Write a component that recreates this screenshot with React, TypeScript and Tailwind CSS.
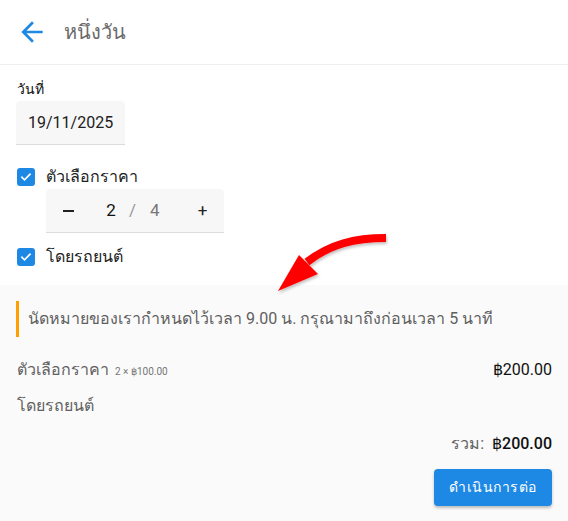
import React from "react";

function Check() {
  return (
    <span className="flex h-[18px] w-[18px] items-center justify-center rounded-[3px] bg-[#1e88e5]">
      <svg width="12" height="12" viewBox="0 0 24 24" fill="none" stroke="white" strokeWidth="3.5" strokeLinecap="square">
        <path d="M4 12.5l5 5L20 6.5" />
      </svg>
    </span>
  );
}

export default function App() {
  return (
    <div className="relative flex h-[521px] w-[568px] flex-col bg-white font-['Roboto','Noto_Sans',sans-serif] text-[16px] text-[#212121]">
      <header className="flex h-[65px] items-center gap-[16px] border-b border-[#eeeeee] pl-[16px]">
        <svg width="32" height="32" viewBox="0 0 24 24" fill="#1e88e5">
          <path d="M20 11H7.83l5.59-5.59L12 4l-8 8 8 8 1.41-1.41L7.83 13H20v-2z" />
        </svg>
        <span className="text-[20px] text-[#6b6b6b]">หนึ่งวัน</span>
      </header>

      <div className="flex flex-col px-[16px] pt-[14px]">
        <label className="pl-[1px] text-[14px] leading-[20px] text-[#111]">วันที่</label>
        <div className="mt-[2px] flex h-[44px] w-[109px] items-center rounded-t-[4px] border-b border-[#dcdcdc] bg-[#f7f7f7] pl-[12px]">
          19/11/2025
        </div>

        <div className="mt-[22px] flex items-center gap-[11px] pl-[1px]">
          <Check />
          <span className="leading-[20px]">ตัวเลือกราคา</span>
        </div>
        <div className="ml-[30px] mt-[2px] flex h-[44px] w-[178px] items-center rounded-t-[4px] border-b border-[#dcdcdc] bg-[#f7f7f7] text-[17px]">
          <span className="ml-[17px] h-[2px] w-[11px] bg-[#212121]" />
          <span className="ml-[32px] w-[10px] text-center text-[#111]">2</span>
          <span className="ml-[13px] text-[#999]">/</span>
          <span className="ml-[14px] text-[#777]">4</span>
          <span className="ml-[37px] w-[12px] text-center">+</span>
        </div>

        <div className="mt-[14px] flex items-center gap-[11px] pl-[1px]">
          <Check />
          <span className="leading-[20px]">โดยรถยนต์</span>
        </div>
      </div>

      <div className="mt-[18px] flex flex-1 flex-col bg-[#fafafa] px-[16px]">
        <div className="mt-[16px] flex h-[36px] items-center border-l-[3px] border-[#ffa000] pl-[9px] text-[#5f5f5f]">
          นัดหมายของเรากำหนดไว้เวลา 9.00 น. กรุณามาถึงก่อนเวลา 5 นาที
        </div>

        <div className="mt-[21px] flex items-center justify-between pl-[1px]">
          <div className="flex items-baseline gap-[6px]">
            <span className="text-[#616161]">ตัวเลือกราคา</span>
            <span className="text-[10px] text-[#757575]">2 × ฿100.00</span>
          </div>
          <span className="text-[#111]">฿200.00</span>
        </div>
        <div className="mt-[12px] pl-[1px] text-[#616161]">โดยรถยนต์</div>

        <div className="mt-[14px] flex items-center justify-end gap-[8px]">
          <span className="text-[#616161]">รวม:</span>
          <span className="font-medium text-[#111]">฿200.00</span>
        </div>

        <div className="mt-[13px] flex justify-end">
          <button className="h-[37px] w-[118px] rounded-[4px] bg-[#1e88e5] text-[14px] font-medium tracking-[0.5px] text-white shadow-[0_2px_3px_rgba(0,0,0,0.25)]">
            ดำเนินการต่อ
          </button>
        </div>
      </div>

      <svg className="pointer-events-none absolute left-0 top-0" width="568" height="521" viewBox="0 0 568 521">
        <defs>
          <filter id="sh" x="-20%" y="-20%" width="140%" height="140%">
            <feDropShadow dx="1" dy="2" stdDeviation="1.5" floodColor="#000" floodOpacity="0.25" />
          </filter>
        </defs>
        <g filter="url(#sh)">
          <path d="M386 238 C355 238 330 244 307 262" stroke="#ff0000" strokeWidth="8" fill="none" />
          <polygon points="278,291 299,255 318,274" fill="#ff0000" />
        </g>
      </svg>
    </div>
  );
}
